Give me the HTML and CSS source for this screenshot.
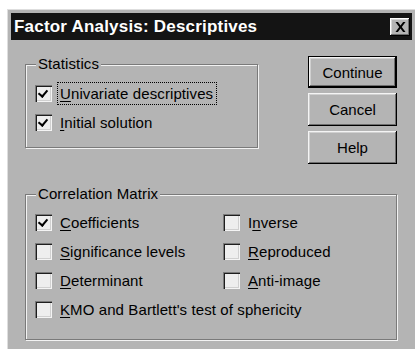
FILE: index.html
```html
<!DOCTYPE html>
<html lang="en">
<head>
    <meta charset="UTF-8">
    <title>Factor Analysis: Descriptives</title>
    <link rel="stylesheet" href="styles.css">
</head>
<body>
    <div class="window">
        <div class="titlebar">
            <span class="title">Factor Analysis: Descriptives</span>
            <button class="close" aria-label="Close">
                <svg width="11" height="10" viewBox="0 0 11 10"><path d="M0.5 0h2.4l2.6 3.4L8.1 0h2.4L6.8 5l3.7 5H8.1L5.5 6.6 2.9 10H0.5l3.7-5z" fill="#000"/></svg>
            </button>
        </div>

        <div class="content">
            <div class="top-row">
                <fieldset class="group stats">
                    <legend>Statistics</legend>
                    <label class="check">
                        <span class="box checked"></span>
                        <span class="text focus"><u>U</u>nivariate descriptives</span>
                    </label>
                    <label class="check">
                        <span class="box checked"></span>
                        <span class="text"><u>I</u>nitial solution</span>
                    </label>
                </fieldset>

                <div class="buttons">
                    <button class="btn default">Continue</button>
                    <button class="btn">Cancel</button>
                    <button class="btn">Help</button>
                </div>
            </div>

            <fieldset class="group matrix">
                <legend>Correlation Matrix</legend>
                <label class="check">
                    <span class="box checked"></span>
                    <span class="text"><u>C</u>oefficients</span>
                </label>
                <label class="check">
                    <span class="box"></span>
                    <span class="text">I<u>n</u>verse</span>
                </label>
                <label class="check">
                    <span class="box"></span>
                    <span class="text"><u>S</u>ignificance levels</span>
                </label>
                <label class="check">
                    <span class="box"></span>
                    <span class="text"><u>R</u>eproduced</span>
                </label>
                <label class="check">
                    <span class="box"></span>
                    <span class="text"><u>D</u>eterminant</span>
                </label>
                <label class="check">
                    <span class="box"></span>
                    <span class="text"><u>A</u>nti-image</span>
                </label>
                <label class="check wide">
                    <span class="box"></span>
                    <span class="text"><u>K</u>MO and Bartlett's test of sphericity</span>
                </label>
            </fieldset>
        </div>
    </div>
</body>
</html>
```

FILE: styles.css
```css
* { margin: 0; padding: 0; box-sizing: border-box; }
html, body { height: 100%; }
body { background: #fff; font-family: "Liberation Sans", Arial, sans-serif; font-size: 15px; letter-spacing: 0.1px; color: #000; overflow: hidden; }

.window { margin: 9px 0 0 7px; height: calc(100% - 9px); background: #b4b4b4; border-top: 1px solid #dedede; border-left: 1px solid #dedede; padding: 3px 3px 0 3px; }

.titlebar { height: 27px; background: #141414; display: flex; align-items: center; justify-content: space-between; padding: 0 2px 0 3px; }
.title { color: #fff; font-weight: bold; font-size: 17px; letter-spacing: 0.2px; }
.close { width: 20px; height: 18px; background: #b4b4b4; border: none; display: flex; align-items: center; justify-content: center;
    box-shadow: inset -1px -1px 0 #000, inset 1px 1px 0 #fff, inset -2px -2px 0 #6e6e6e, inset 2px 2px 0 #d6d6d6; }

.content { padding: 16px 0 0 14px; width: 386px; }
.top-row { display: flex; justify-content: space-between; align-items: flex-start; }

.group { border: 1px solid #7a7a7a; box-shadow: inset 1px 1px 0 #f2f2f2, 1px 1px 0 #f2f2f2; }
.group legend { margin-left: 1px; padding: 0 2px; background: #b4b4b4; line-height: 16px; }

.stats { width: 233px; padding: 7px 0 10px 9px; }
.matrix { width: 372px; margin-top: 22px; padding: 6px 0 15px 9px; display: grid; grid-template-columns: 188px 1fr; }
.matrix .wide { grid-column: 1 / 3; }

.check { display: flex; align-items: center; height: 29px; gap: 8px; }
.box { width: 17px; height: 17px; background: #eeeeee; flex: none; position: relative;
    box-shadow: inset 1px 1px 0 #7a7a7a, inset 2px 2px 0 #1e1e1e, inset -1px -1px 0 #f4f4f4, inset -2px -2px 0 #d0d0d0; }
.box.checked::after { content: ""; position: absolute; left: 5px; top: 3px; width: 4px; height: 7px; border: solid #000; border-width: 0 2.5px 2.5px 0; transform: rotate(40deg); }
.text u { text-decoration-thickness: 1px; text-underline-offset: 2px; }
.focus { outline: 1px dotted #000; outline-offset: 2px; padding-right: 1px; }

.buttons { display: flex; flex-direction: column; gap: 5px; width: 89px; }
.btn { height: 33px; background: #b4b4b4; border: none; font: inherit; color: #000;
    box-shadow: inset -1px -1px 0 #000, inset 1px 1px 0 #f4f4f4, inset -2px -2px 0 #6e6e6e, inset 2px 2px 0 #d0d0d0; }
.btn.default { height: 32px; border: 1px solid #000; }
```
